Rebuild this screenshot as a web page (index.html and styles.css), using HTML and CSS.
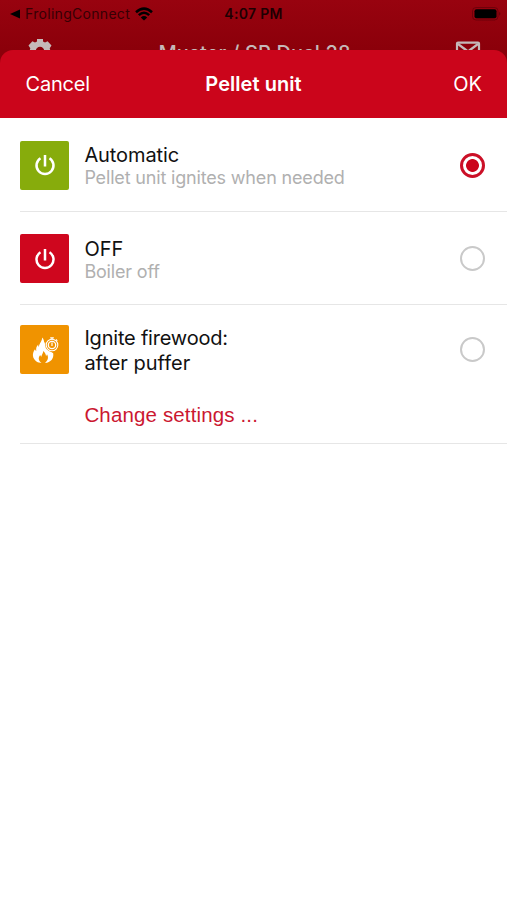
FILE: index.html
```html
<!DOCTYPE html>
<html lang="en">
<head>
    <meta charset="UTF-8">
    <meta name="viewport" content="width=device-width, initial-scale=1.0">
    <title>Pellet unit</title>
    <link rel="stylesheet" href="styles.css">
</head>
<body>
    <div class="backdrop">
        <div class="status-bar">
            <div class="status-left">
                <svg width="10" height="10" viewBox="0 0 10 10"><path d="M0 5 10 .5v9z"/></svg>
                <span class="back-app">FrolingConnect</span>
                <svg class="wifi" width="18" height="14" viewBox="0 0 18 14">
                    <path d="M1 5.200Q9-2 17 5.200M3.800 8.200Q9 3.400 14.200 8.200" fill="none" stroke="#000" stroke-width="2.500"/>
                    <path d="M9 13.500 5.800 10.400Q9 7.800 12.200 10.400z"/>
                </svg>
            </div>
            <span class="clock">4:07 PM</span>
            <svg class="battery" width="30" height="14" viewBox="0 0 30 14">
                <rect x=".5" y=".5" width="25.5" height="12.5" rx="3.5" fill="none" stroke="#000" stroke-opacity=".25"/>
                <rect x="2.500" y="2.300" width="22" height="9" rx="2"/>
                <path d="M27.300 4.700q2 2 0 4z" opacity=".4"/>
            </svg>
        </div>
        <div class="nav-bar">
            <svg width="28" height="28" viewBox="0 0 28 28" fill="#c5b9b9">
                <path fill-rule="evenodd" d="M11 2h6v2.500l2 .9 2.600-1.200 3.900 4.300-1.800 2.700.8 2.800-.8 2.800 1.800 2.700-3.900 4.300-2.600-1.200-2 .9V26h-6v-2.500l-2-.9-2.600 1.200-3.900-4.300 1.800-2.700-.8-2.800.8-2.800-1.800-2.700 3.900-4.300L9 5.400l2-.9zM14 9.800a4.200 4.200 0 1 0 0 8.400 4.200 4.200 0 0 0 0-8.400z"/>
            </svg>
            <span class="nav-title">Muster / SP Dual 28</span>
            <svg width="26" height="20" viewBox="0 0 26 20" fill="none" stroke="#c5b9b9" stroke-width="2.200">
                <rect x="2" y="1.600" width="22" height="16.500" rx="1"/>
                <path d="M3 3l10 7.500L23 3"/>
            </svg>
        </div>
    </div>

    <div class="sheet">
        <div class="sheet-header">
            <span class="cancel">Cancel</span>
            <span class="sheet-title">Pellet unit</span>
            <span class="ok">OK</span>
        </div>

        <div class="options">
            <div class="option">
                <div class="option-icon green">
                    <svg width="24" height="24" viewBox="0 0 24 24" fill="none" stroke="#fff" stroke-width="2.500">
                        <path d="M12 2v11.500M7.500 5.200a8.500 8.500 0 1 0 9 0"/>
                    </svg>
                </div>
                <div class="option-text">
                    <div class="name automatic">Automatic</div>
                    <div class="detail">Pellet unit ignites when needed</div>
                </div>
                <span class="radio selected"></span>
            </div>

            <div class="option">
                <div class="option-icon red">
                    <svg width="24" height="24" viewBox="0 0 24 24" fill="none" stroke="#fff" stroke-width="2.500">
                        <path d="M12 2v11.500M7.500 5.200a8.500 8.500 0 1 0 9 0"/>
                    </svg>
                </div>
                <div class="option-text">
                    <div class="name">OFF</div>
                    <div class="detail">Boiler off</div>
                </div>
                <span class="radio"></span>
            </div>

            <div class="option firewood">
                <div class="option-icon orange">
                    <svg width="28" height="28" viewBox="0 0 28 28">
                        <!-- flame -->
                        <path fill="#fff" d="M11 1.500c.6 3-2.600 5.500-3.200 9.500-.5-.7-.7-1.500-.6-2.500-2.200 2.300-2.200 4.500-1.900 6.500-.8-.3-1.200-1-1.300-1.700C.8 17.500 1.300 22.500 5.500 25.500c1.600 1 3.300 1.400 5 1.400-3.400-2.500-3.400-5.500-1.300-8 .2.900.6 1.400 1.200 1.800.2-2.400 1.800-3.200 1.900-5.700 1.700 1.600 2.600 3.200 2.700 5 .6-.4.9-1 1-1.700 2 3.200.8 6.400-2 8.600 5.800-.4 9-4.500 8.200-9.700l-4.700-3-3-5-.5-3.500c-.6 1-.8 1.600-.8 2.500C13.300 5.500 13 3 11 1.500z"/>
                        <!-- stopwatch -->
                        <circle cx="21" cy="9" r="6.800" fill="#f09300"/>
                        <g fill="none" stroke="#fff">
                            <circle cx="21" cy="9" r="5.800" stroke-width="1.100"/>
                            <circle cx="21" cy="9" r="3.700" stroke-width="1.300"/>
                            <path d="M21 6.500v3.500M19.200 1.800h3.600M21 1.500v2M25 3.500l1.300 1.300" stroke-width="1.200"/>
                        </g>
                    </svg>
                </div>
                <div class="option-text">
                    <div class="name ignite">Ignite firewood:</div>
                    <div class="name">after puffer</div>
                </div>
                <span class="radio"></span>
                <div class="change-settings">Change settings ...</div>
            </div>
        </div>
    </div>
</body>
</html>
```

FILE: styles.css
```css
* {
    box-sizing: border-box;
}

body {
    margin: 0;
    min-height: 100vh;
    background-color: #fff;
    font-family: Inter, "Liberation Sans", sans-serif;
    color: #111;
    white-space: nowrap;
}

svg {
    display: block;
}

.backdrop {
    height: 66px;
    overflow: hidden;
    background: linear-gradient(#98030f, #8b000a 50px);
}

.status-bar {
    display: grid;
    grid-template-columns: 1fr auto 1fr;
    align-items: center;
    height: 27px;
    padding: 0 5px 0 10px;
    color: #1d0002;
}

.status-left {
    display: flex;
    align-items: center;
}

.back-app {
    margin: 0 5px 0 5px;
    font-size: 14px;
    letter-spacing: 0.3px;
    color: #360004;
}

.clock {
    margin-right: 5px;
    font-size: 14px;
    font-weight: 600;
    letter-spacing: 0.3px;
}

.battery {
    justify-self: end;
}

.nav-bar {
    display: flex;
    align-items: flex-start;
    justify-content: space-between;
    padding: 10px 26px 0;
}

.nav-title {
    margin-top: 4px;
    font-size: 20px;
    font-weight: 500;
    line-height: 24px;
    letter-spacing: 0.15px;
    color: #c5b9b9;
}

.nav-bar svg:last-child {
    margin-top: 4px;
}

.sheet {
    position: relative;
    margin-top: -16px;
}

.sheet-header {
    display: grid;
    grid-template-columns: 1fr auto 1fr;
    align-items: center;
    height: 68px;
    padding: 0 25px;
    border-radius: 13px 13px 0 0;
    background-color: #cb051b;
    color: #fff;
    font-size: 20px;
}

.cancel {
    padding-left: 0.5px;
    letter-spacing: -0.2px;
}

.sheet-title {
    font-weight: 600;
    letter-spacing: 0.05px;
}

.ok {
    justify-self: end;
}

.option {
    display: grid;
    grid-template-columns: 49px 1fr 25px;
    column-gap: 15px;
    align-items: center;
    height: 93.5px;
    margin-left: 20.4px;
    padding: 2px 22px 0 0;
    border-bottom: 1px solid #e6e6e6;
}

.option-icon {
    display: flex;
    align-items: center;
    justify-content: center;
    height: 49px;
    border-radius: 2px;
}

.option-text {
    padding-top: 2px;
}

.green {
    background-color: #87ac0c;
}

.red {
    background-color: #cf061e;
}

.orange {
    background-color: #f09300;
}

.name {
    font-size: 20px;
    line-height: 24px;
}

.automatic {
    letter-spacing: -0.1px;
}

.ignite {
    letter-spacing: -0.2px;
}

.detail {
    font-size: 18px;
    line-height: 22px;
    letter-spacing: -0.17px;
    color: #b0b0b0;
}

.radio {
    width: 25px;
    height: 25px;
    border: 2px solid #c9c9c9;
    border-radius: 50%;
}

.radio.selected {
    border: 3px solid #cb1027;
    background: radial-gradient(circle, #cb051b 6px, #fff 6.8px);
}

.firewood {
    grid-template-rows: 49px 1fr;
    height: 138.5px;
    padding-top: 20px;
}

.firewood .name {
    line-height: 25px;
}

.change-settings {
    grid-column: 2;
    margin-top: 14px;
    font-family: "Liberation Sans", Arial, sans-serif;
    font-size: 20.5px;
    letter-spacing: 0.14px;
    color: #cb1730;
}
```
